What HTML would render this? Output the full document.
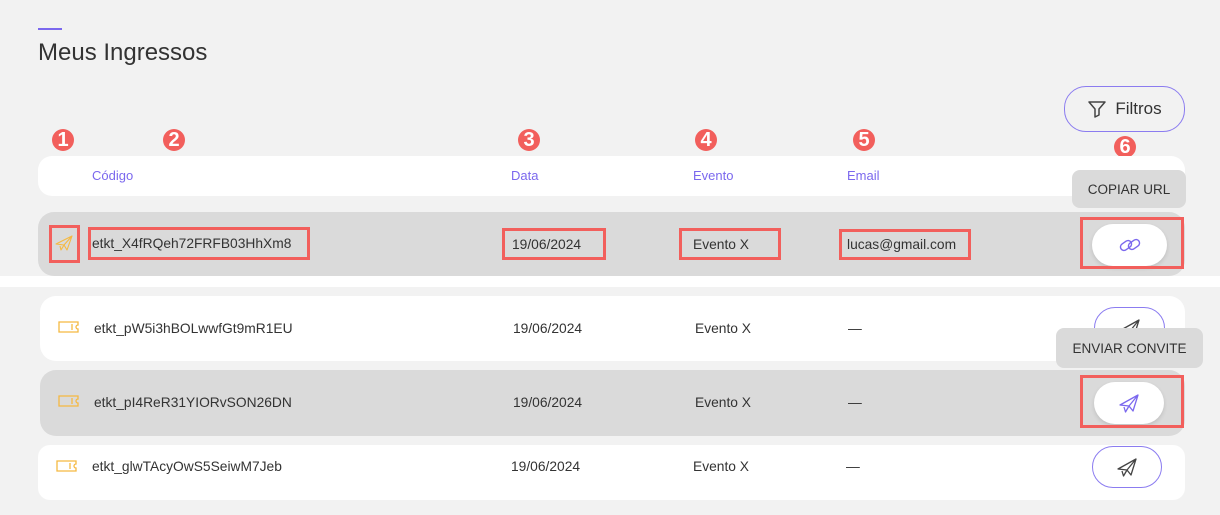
<!DOCTYPE html>
<html><head><meta charset="utf-8"><style>
*{margin:0;padding:0;box-sizing:border-box}
body{width:1220px;height:515px;background:#f2f2f2;font-family:"Liberation Sans",sans-serif;position:relative;overflow:hidden;color:#333}
.a{position:absolute}
.t{font-size:13.8px;color:#333;white-space:nowrap}
.h{font-size:13px;color:#7b68ee}
.badge{position:absolute;width:22px;height:22px;border-radius:50%;background:#f25f5c;color:#fff;font-weight:bold;font-size:20px;line-height:22px;text-align:center}
.rb{position:absolute;border:3px solid #f25f5c}
.pill{position:absolute;border-radius:22px;display:flex;align-items:center;justify-content:center}
.tip{position:absolute;background:#dadada;border-radius:8px;font-size:13.5px;color:#333;display:flex;align-items:center;justify-content:center}
</style></head><body>
<div class="a" style="left:38px;top:28px;width:24px;height:2px;background:#7b68ee"></div>
<div class="a" style="left:38px;top:39px;font-size:24px;color:#333">Meus Ingressos</div>

<div class="pill" style="left:1064px;top:86px;width:121px;height:46px;border:1px solid #8b7cf0;font-size:17px;color:#333">
<svg width="20" height="20" viewBox="0 0 20 20" style="margin-right:8px"><path d="M2 3h16l-6 7v6l-4 2v-8z" fill="none" stroke="#444" stroke-width="1.5" stroke-linejoin="round"/></svg>Filtros</div>

<div class="badge" style="left:52px;top:129px">1</div>
<div class="badge" style="left:163px;top:129px">2</div>
<div class="badge" style="left:518px;top:129px">3</div>
<div class="badge" style="left:695px;top:129px">4</div>
<div class="badge" style="left:853px;top:129px">5</div>
<div class="badge" style="left:1114px;top:136px">6</div>

<div class="a" style="left:38px;top:156px;width:1147px;height:40px;background:#fff;border-radius:14px"></div>
<div class="a h" style="left:92px;top:168px">Código</div>
<div class="a h" style="left:511px;top:168px">Data</div>
<div class="a h" style="left:693px;top:168px">Evento</div>
<div class="a h" style="left:847px;top:168px">Email</div>

<div class="a" style="left:38px;top:212px;width:1147px;height:64px;background:#dadada;border-radius:16px"></div>
<div class="a" style="left:0;top:276px;width:1220px;height:11px;background:#fff"></div>
<svg class="a" style="left:55px;top:235px" width="18" height="16" viewBox="0 0 18 16"><path d="M1 9L17 1 12 15 9 10zM9 10L17 1M5 11l1 4 3-5" fill="none" stroke="#f5b942" stroke-width="1.1" stroke-linejoin="round"/></svg>
<div class="a t" style="left:92px;top:236px">etkt_X4fRQeh72FRFB03HhXm8</div>
<div class="a t" style="left:512px;top:237px">19/06/2024</div>
<div class="a t" style="left:693px;top:237px">Evento X</div>
<div class="a t" style="left:847px;top:237px">lucas@gmail.com</div>
<div class="rb" style="left:49px;top:225px;width:31px;height:38px"></div>
<div class="rb" style="left:88px;top:227px;width:222px;height:33px"></div>
<div class="rb" style="left:502px;top:228px;width:104px;height:32px"></div>
<div class="rb" style="left:679px;top:228px;width:102px;height:32px"></div>
<div class="rb" style="left:839px;top:229px;width:132px;height:31px"></div>
<div class="tip" style="left:1072px;top:170px;width:114px;height:38px">COPIAR URL</div>
<div class="pill" style="left:1092px;top:224px;width:75px;height:42px;background:#fff;box-shadow:0 2px 4px rgba(0,0,0,.12)">
<svg width="26" height="20" viewBox="0 0 26 20"><g fill="none" stroke="#7b68ee" stroke-width="1.4"><rect x="3" y="7" width="12" height="7" rx="3.5" transform="rotate(-35 9 10.5)"/><rect x="11" y="6" width="12" height="7" rx="3.5" transform="rotate(-35 17 9.5)"/></g></svg></div>
<div class="rb" style="left:1080px;top:217px;width:104px;height:52px"></div>

<div class="a" style="left:40px;top:296px;width:1145px;height:65px;background:#fff;border-radius:16px"></div>
<div class="a" style="left:40px;top:370px;width:1145px;height:66px;background:#dadada;border-radius:16px"></div>
<div class="a" style="left:38px;top:445px;width:1147px;height:55px;background:#fff;border-radius:12px"></div>

<svg class="a" style="left:58px;top:321px" width="21" height="12" viewBox="0 0 21 12"><path d="M1 1h19v3a2 2 0 0 0 0 4v3H1z M14 3v6" fill="none" stroke="#f5b942" stroke-width="1.3"/></svg>
<svg class="a" style="left:58px;top:395px" width="21" height="12" viewBox="0 0 21 12"><path d="M1 1h19v3a2 2 0 0 0 0 4v3H1z M14 3v6" fill="none" stroke="#f5b942" stroke-width="1.3"/></svg>
<svg class="a" style="left:56px;top:460px" width="21" height="12" viewBox="0 0 21 12"><path d="M1 1h19v3a2 2 0 0 0 0 4v3H1z M14 3v6" fill="none" stroke="#f5b942" stroke-width="1.3"/></svg>

<div class="a t" style="left:94px;top:321px">etkt_pW5i3hBOLwwfGt9mR1EU</div>
<div class="a t" style="left:513px;top:321px">19/06/2024</div>
<div class="a t" style="left:695px;top:321px">Evento X</div>
<div class="a t" style="left:848px;top:321px">—</div>
<div class="a t" style="left:94px;top:395px">etkt_pI4ReR31YIORvSON26DN</div>
<div class="a t" style="left:513px;top:395px">19/06/2024</div>
<div class="a t" style="left:695px;top:395px">Evento X</div>
<div class="a t" style="left:848px;top:395px">—</div>
<div class="a t" style="left:92px;top:459px">etkt_glwTAcyOwS5SeiwM7Jeb</div>
<div class="a t" style="left:511px;top:459px">19/06/2024</div>
<div class="a t" style="left:693px;top:459px">Evento X</div>
<div class="a t" style="left:846px;top:459px">—</div>

<div class="pill" style="left:1094px;top:307px;width:71px;height:42px;border:1px solid #8b7cf0">
<svg width="22" height="20" viewBox="0 0 22 20"><path d="M2 12L20 2 15 18 11 13zM11 13L20 2M6 14l1.5 5 3.5-6" fill="none" stroke="#444" stroke-width="1.3" stroke-linejoin="round"/></svg></div>
<div class="tip" style="left:1056px;top:328px;width:147px;height:40px">ENVIAR CONVITE</div>
<div class="pill" style="left:1094px;top:382px;width:70px;height:42px;background:#fff;box-shadow:0 2px 4px rgba(0,0,0,.12)">
<svg width="22" height="20" viewBox="0 0 22 20"><path d="M2 12L20 2 15 18 11 13zM11 13L20 2M6 14l1.5 5 3.5-6" fill="none" stroke="#7b68ee" stroke-width="1.3" stroke-linejoin="round"/></svg></div>
<div class="rb" style="left:1080px;top:375px;width:104px;height:53px"></div>
<div class="pill" style="left:1092px;top:446px;width:70px;height:42px;border:1px solid #8b7cf0">
<svg width="22" height="20" viewBox="0 0 22 20"><path d="M2 12L20 2 15 18 11 13zM11 13L20 2M6 14l1.5 5 3.5-6" fill="none" stroke="#444" stroke-width="1.3" stroke-linejoin="round"/></svg></div>
</body></html>
